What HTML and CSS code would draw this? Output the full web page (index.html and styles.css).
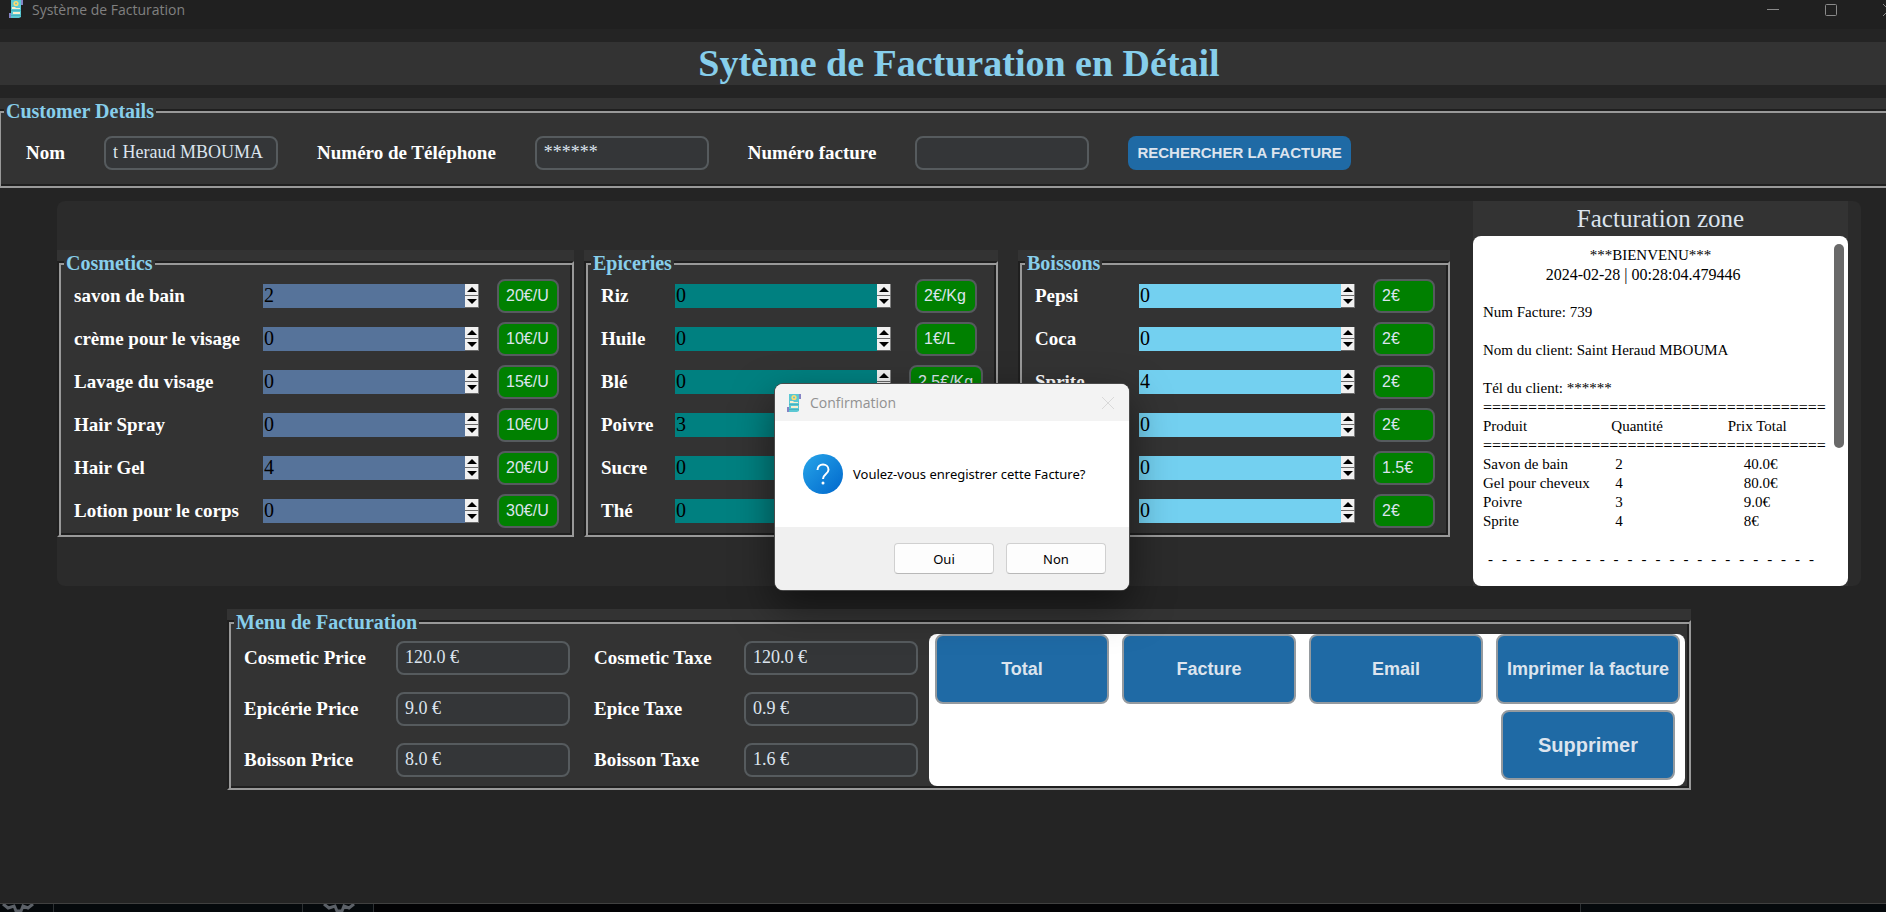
FILE: index.html
```html
<!DOCTYPE html>
<html lang="fr">
<head>
<meta charset="utf-8">
<title>Système de Facturation</title>
<link rel="stylesheet" href="styles.css">
</head>
<body>
<svg width="0" height="0" class="defs" aria-hidden="true">
  <symbol id="receipt" viewBox="0 0 14 18">
    <path d="M11 0h3v5h-3zM0 13h3v5H0z" fill="#8583c4"/>
    <path d="M2 0h10v17l-2 1H2z" fill="#5bc8d3"/>
    <circle cx="7" cy="3.5" r="2.6" fill="#ffdc70"/>
    <circle cx="7" cy="3.5" r="1" fill="#5bc8d3"/>
    <path d="M3 7h3l1 1h4v1H3zM4 12h7v2H4z" fill="#f8efd0"/>
    <path d="M2 10h10v1H2zM2 15h10v1H2z" fill="#46b3c0"/>
  </symbol>
  <symbol id="gear" viewBox="0 0 34 8">
    <path d="M2 0l5 4 6-2 2 5h5l2-5 5 2 5-4" fill="none" stroke="#5c6168" stroke-width="3"/>
  </symbol>
</svg>
<div class="window">
  <header class="titlebar">
    <svg class="app-icon"><use href="#receipt"/></svg>
    <span class="app-name">Système de Facturation</span>
    <button class="win-btn" aria-label="Réduire"><svg viewBox="0 0 12 12"><path d="M0 5.500h12"/></svg></button>
    <button class="win-btn" aria-label="Agrandir"><svg viewBox="0 0 12 12"><rect x=".5" y=".5" width="11" height="11" rx="1"/></svg></button>
    <button class="win-btn" aria-label="Fermer"><svg viewBox="0 0 12 12"><path d="M0 0l12 12M12 0L0 12"/></svg></button>
  </header>

  <h1 class="banner">Sytème de Facturation en Détail</h1>

  <fieldset class="frame customer">
    <legend class="legend">Customer Details</legend>
    <div class="frame-body customer-body">
      <label class="label" for="nom">Nom</label>
      <input class="entry" id="nom" value="t Heraud MBOUMA">
      <label class="label" for="tel">Numéro de Téléphone</label>
      <input class="entry" id="tel" value="******">
      <label class="label" for="num">Numéro facture</label>
      <input class="entry" id="num">
      <button class="btn search">RECHERCHER LA FACTURE</button>
    </div>
  </fieldset>

  <main class="shop">
    <fieldset class="frame cosmetics">
      <legend class="legend">Cosmetics</legend>
      <div class="frame-body products">
        <label class="label" for="c1">savon de bain</label>
        <div class="spin"><input id="c1" value="2"><button class="up" aria-label="Plus"></button><button class="down" aria-label="Moins"></button></div>
        <input class="price" aria-label="Prix" readonly value="20€/U">
        <label class="label" for="c2">crème pour le visage</label>
        <div class="spin"><input id="c2" value="0"><button class="up" aria-label="Plus"></button><button class="down" aria-label="Moins"></button></div>
        <input class="price" aria-label="Prix" readonly value="10€/U">
        <label class="label" for="c3">Lavage du visage</label>
        <div class="spin"><input id="c3" value="0"><button class="up" aria-label="Plus"></button><button class="down" aria-label="Moins"></button></div>
        <input class="price" aria-label="Prix" readonly value="15€/U">
        <label class="label" for="c4">Hair Spray</label>
        <div class="spin"><input id="c4" value="0"><button class="up" aria-label="Plus"></button><button class="down" aria-label="Moins"></button></div>
        <input class="price" aria-label="Prix" readonly value="10€/U">
        <label class="label" for="c5">Hair Gel</label>
        <div class="spin"><input id="c5" value="4"><button class="up" aria-label="Plus"></button><button class="down" aria-label="Moins"></button></div>
        <input class="price" aria-label="Prix" readonly value="20€/U">
        <label class="label" for="c6">Lotion pour le corps</label>
        <div class="spin"><input id="c6" value="0"><button class="up" aria-label="Plus"></button><button class="down" aria-label="Moins"></button></div>
        <input class="price" aria-label="Prix" readonly value="30€/U">
      </div>
    </fieldset>

    <fieldset class="frame groceries">
      <legend class="legend">Epiceries</legend>
      <div class="frame-body products">
        <label class="label" for="e1">Riz</label>
        <div class="spin"><input id="e1" value="0"><button class="up" aria-label="Plus"></button><button class="down" aria-label="Moins"></button></div>
        <input class="price" aria-label="Prix" readonly value="2€/Kg">
        <label class="label" for="e2">Huile</label>
        <div class="spin"><input id="e2" value="0"><button class="up" aria-label="Plus"></button><button class="down" aria-label="Moins"></button></div>
        <input class="price" aria-label="Prix" readonly value="1€/L">
        <label class="label" for="e3">Blé</label>
        <div class="spin"><input id="e3" value="0"><button class="up" aria-label="Plus"></button><button class="down" aria-label="Moins"></button></div>
        <input class="price wide" aria-label="Prix" readonly value="2.5€/Kg">
        <label class="label" for="e4">Poivre</label>
        <div class="spin"><input id="e4" value="3"><button class="up" aria-label="Plus"></button><button class="down" aria-label="Moins"></button></div>
        <input class="price" aria-label="Prix" readonly value="3€/Kg">
        <label class="label" for="e5">Sucre</label>
        <div class="spin"><input id="e5" value="0"><button class="up" aria-label="Plus"></button><button class="down" aria-label="Moins"></button></div>
        <input class="price" aria-label="Prix" readonly value="2€/Kg">
        <label class="label" for="e6">Thé</label>
        <div class="spin"><input id="e6" value="0"><button class="up" aria-label="Plus"></button><button class="down" aria-label="Moins"></button></div>
        <input class="price" aria-label="Prix" readonly value="2€/U">
      </div>
    </fieldset>

    <fieldset class="frame drinks">
      <legend class="legend">Boissons</legend>
      <div class="frame-body products">
        <label class="label" for="b1">Pepsi</label>
        <div class="spin"><input id="b1" value="0"><button class="up" aria-label="Plus"></button><button class="down" aria-label="Moins"></button></div>
        <input class="price" aria-label="Prix" readonly value="2€">
        <label class="label" for="b2">Coca</label>
        <div class="spin"><input id="b2" value="0"><button class="up" aria-label="Plus"></button><button class="down" aria-label="Moins"></button></div>
        <input class="price" aria-label="Prix" readonly value="2€">
        <label class="label" for="b3">Sprite</label>
        <div class="spin"><input id="b3" value="4"><button class="up" aria-label="Plus"></button><button class="down" aria-label="Moins"></button></div>
        <input class="price" aria-label="Prix" readonly value="2€">
        <label class="label" for="b4">Fanta</label>
        <div class="spin"><input id="b4" value="0"><button class="up" aria-label="Plus"></button><button class="down" aria-label="Moins"></button></div>
        <input class="price" aria-label="Prix" readonly value="2€">
        <label class="label" for="b5">Eau</label>
        <div class="spin"><input id="b5" value="0"><button class="up" aria-label="Plus"></button><button class="down" aria-label="Moins"></button></div>
        <input class="price" aria-label="Prix" readonly value="1.5€">
        <label class="label" for="b6">Jus</label>
        <div class="spin"><input id="b6" value="0"><button class="up" aria-label="Plus"></button><button class="down" aria-label="Moins"></button></div>
        <input class="price" aria-label="Prix" readonly value="2€">
      </div>
    </fieldset>

    <section class="receipt">
      <h2 class="receipt-title">Facturation zone</h2>
      <div class="paper">
        <p class="center">***BIENVENU***</p>
        <p class="center stamp">2024-02-28 | 00:28:04.479446</p>
        <p class="spaced">Num Facture: 739</p>
        <p class="spaced">Nom du client: Saint Heraud MBOUMA</p>
        <p class="spaced">Tél du client: ******</p>
        <table class="lines">
          <thead>
            <tr><td colspan="3" class="rule">======================================</td></tr>
            <tr><th>Produit</th><th>Quantité</th><th>Prix Total</th></tr>
            <tr><td colspan="3" class="rule">======================================</td></tr>
          </thead>
          <tbody>
            <tr><td>Savon de bain</td><td>2</td><td>40.0€</td></tr>
            <tr><td>Gel pour cheveux</td><td>4</td><td>80.0€</td></tr>
            <tr><td>Poivre</td><td>3</td><td>9.0€</td></tr>
            <tr><td>Sprite</td><td>4</td><td>8€</td></tr>
          </tbody>
        </table>
        <p class="spaced dashes">- - - - - - - - - - - - - - - - - - - - - - - -</p>
        <span class="thumb"></span>
      </div>
    </section>
  </main>

  <fieldset class="frame billing">
    <legend class="legend">Menu de Facturation</legend>
    <div class="frame-body billing-body">
      <div class="totals">
        <label class="label" for="cp">Cosmetic Price</label><input class="entry" id="cp" value="120.0 €">
        <label class="label" for="ct">Cosmetic Taxe</label><input class="entry" id="ct" value="120.0 €">
        <label class="label" for="ep">Epicérie Price</label><input class="entry" id="ep" value="9.0 €">
        <label class="label" for="et">Epice Taxe</label><input class="entry" id="et" value="0.9 €">
        <label class="label" for="bp">Boisson Price</label><input class="entry" id="bp" value="8.0 €">
        <label class="label" for="bt">Boisson Taxe</label><input class="entry" id="bt" value="1.6 €">
      </div>
      <div class="actions">
        <button class="btn action">Total</button>
        <button class="btn action">Facture</button>
        <button class="btn action">Email</button>
        <button class="btn action print">Imprimer la facture</button>
        <button class="btn action delete">Supprimer</button>
      </div>
    </div>
  </fieldset>

  <div class="dialog" role="dialog" aria-labelledby="dlg-title">
    <div class="dialog-bar">
      <svg class="app-icon"><use href="#receipt"/></svg>
      <span id="dlg-title">Confirmation</span>
      <button class="dialog-close" aria-label="Fermer"><svg viewBox="0 0 12 12"><path d="M0 0l12 12M12 0L0 12"/></svg></button>
    </div>
    <div class="dialog-body">
      <svg class="question" viewBox="0 0 40 40">
        <defs><linearGradient id="blue" x1="0" y1="0" x2="1" y2="1"><stop offset="0" stop-color="#27a5e9"/><stop offset="1" stop-color="#0067cc"/></linearGradient></defs>
        <circle cx="20" cy="20" r="20" fill="url(#blue)"/>
        <path d="M14.500 16c0-3.500 2.500-5.500 5.500-5.500s5.500 2 5.500 5.200c0 4.300-5.500 4.300-5.500 9.300" fill="none" stroke="#fff" stroke-width="2"/>
        <circle cx="20" cy="29" r="1.500" fill="#fff"/>
      </svg>
      <p>Voulez-vous enregistrer cette Facture?</p>
    </div>
    <div class="dialog-foot">
      <button class="dialog-btn">Oui</button>
      <button class="dialog-btn">Non</button>
    </div>
  </div>
</div>
<footer class="desktop">
  <span class="cell first"><svg class="gear"><use href="#gear"/></svg></span>
  <span class="cell second"></span>
  <span class="cell third"><svg class="gear"><use href="#gear"/></svg></span>
  <span class="cell rest"></span>
  <span class="cell last"></span>
</footer>
</body>
</html>
```
FILE: styles.css
```css
* { box-sizing: border-box; }
body {
  margin: 0;
  min-height: 100vh;
  display: flex;
  flex-direction: column;
  overflow: hidden;
  background: #050608;
  font-family: "Liberation Serif", "Times New Roman", serif;
}
p, h1, h2 { margin: 0; font-weight: normal; }
button, input { font: inherit; margin: 0; padding: 0; border: 0; border-radius: 0; outline: 0; }
.defs { position: absolute; }

/* The window runs past the right edge of the screen. */
.window {
  position: relative;
  flex: 1;
  margin-right: -32px;
  background: #242424;
  border-bottom: 1px solid #404040;
}

.titlebar {
  display: flex;
  align-items: flex-start;
  height: 29px;
  padding-left: 9px;
  background: #202020;
  color: #808080;
  font: 14px/20px "Open Sans", "Noto Sans", sans-serif;
}
.app-icon { width: 14px; height: 18px; flex: none; }
.app-name { flex: 1; margin-left: 9px; }
.win-btn { width: 58px; height: 20px; background: none; }
.win-btn svg { display: block; width: 12px; height: 12px; margin: 4px auto; fill: none; stroke: #8a8a8a; }

.banner {
  margin: 13px 0;
  background: #333;
  color: #87ceeb;
  font-weight: bold;
  font-size: 38px;
  line-height: 43px;
  text-align: center;
}

/* Labelled frames with a two-tone groove */
.frame {
  position: relative;
  min-width: 0;
  margin: 0;
  padding: 11px 0 0;
  border: 0;
  background: #333;
}
.legend {
  position: absolute;
  top: 2px;
  left: 7px;
  padding: 0 2px;
  background: #333;
  color: #87ceeb;
  font-weight: bold;
  font-size: 20px;
  line-height: 22px;
}
.frame-body {
  border: 2px solid;
  border-color: #1f1f1f #999 #999 #1f1f1f;
  box-shadow: inset 2px 2px 0 #999, inset -2px -2px 0 #1f1f1f;
}
.label { color: #fff; font-weight: bold; font-size: 19px; line-height: 24px; white-space: nowrap; }
.entry {
  width: 174px;
  height: 34px;
  padding: 0 7px 1px;
  border: 2px solid #565b5e;
  border-radius: 8px;
  background: #343638;
  color: #dce4ee;
  font-size: 18px;
}
.btn {
  border-radius: 8px;
  background: #1f6aa5;
  color: #dce4ee;
  font: bold 18px/24px "Liberation Sans", Arial, sans-serif;
}

.customer { margin: 0 -3px; }
.customer-body { display: flex; align-items: center; gap: 39px; padding: 25px 27px 16px; }
.search { height: 34px; padding: 0 9px; font-size: 15px; }

.shop {
  display: grid;
  grid-template-columns: 517fr 434fr 442fr 398fr;
  align-items: center;
  margin: 13px 57px 0;
  padding-right: 13px;
  border-radius: 8px;
  background: #2b2b2b;
}
.groceries { margin: 0 10px; }
.drinks { margin-left: 10px; }
.products {
  display: grid;
  align-items: center;
  row-gap: 9px;
  padding: 16px 13px 7px 15px;
}
.cosmetics .products { grid-template-columns: 1fr 216px 18px 62px; }
.groceries .products { grid-template-columns: 1fr 216px 18px 74px; }
.drinks .products { grid-template-columns: 1fr 216px 18px 62px; }
.spin {
  grid-column: 2;
  display: grid;
  grid-template: 12px 12px / 1fr 14px;
}
.spin input { grid-row: 1 / 3; min-width: 0; padding: 0 1px 1px; color: #000; font-size: 20px; line-height: 23px; }
.spin button {
  display: grid;
  place-items: center;
  border-right: 1px solid #808080;
  border-bottom: 1px solid #696969;
  background: #f0f0f0;
}
.up::before, .down::before { content: ""; border: 5px solid transparent; }
.up::before { border-top: 0; border-bottom-color: #000; }
.down::before { border-bottom: 0; border-top-color: #000; }
.cosmetics .spin input { background: #56739a; }
.groceries .spin input { background: #008080; }
.drinks .spin input { background: #73d0f0; }
.price {
  grid-column: 4;
  justify-self: center;
  width: 62px;
  height: 34px;
  padding: 0 0 0 7px;
  border: 2px solid #565b5e;
  border-radius: 8px;
  background: #008000;
  color: #dce4ee;
  font: 16px "Liberation Sans", Arial, sans-serif;
}
.price.wide { width: 74px; }

.receipt { align-self: start; margin-left: 23px; background: #333; }
.receipt-title { color: #dce4ee; font-size: 25px; line-height: 35px; text-align: center; }
.paper {
  position: relative;
  height: 350px;
  padding: 10px 22px 0 10px;
  border-radius: 8px;
  background: #fff;
  color: #000;
  font-size: 15px;
  line-height: 19px;
  white-space: nowrap;
}
.center { padding-right: 8px; text-align: center; }
.stamp { padding-right: 23px; font-size: 16px; line-height: 19px; }
.spaced { margin-top: 19px; }
.lines { border-collapse: collapse; width: 100%; table-layout: fixed; }
.lines th, .lines td { height: 19px; padding: 0; font-weight: normal; text-align: left; }
.lines th:nth-child(2) { padding-left: 14px; }
.lines th:nth-child(3) { padding-left: 16px; }
.lines tbody td:nth-child(2) { padding-left: 18px; }
.lines tbody td:nth-child(3) { padding-left: 32px; }
.lines .rule { font-size: 16px; }
.dashes { margin-left: 5px; margin-right: 12px; text-align-last: justify; white-space: normal; }
.thumb { position: absolute; top: 8px; right: 4px; width: 10px; height: 204px; border-radius: 5px; background: #696969; }

.billing { width: fit-content; margin: 23px auto 0; }
.billing-body { display: flex; align-items: flex-start; padding: 12px 4px 2px 15px; }
.totals {
  display: grid;
  grid-template-columns: 152px 198px 150px 174px;
  align-items: center;
  row-gap: 17px;
  padding-top: 7px;
}
.actions {
  display: grid;
  grid-template-columns: repeat(3, 174px) 184px;
  column-gap: 13px;
  row-gap: 6px;
  margin-left: 11px;
  padding: 0 5px 6px 6px;
  border-radius: 8px;
  background: #fff;
}
.action { height: 70px; border: 2px solid #949a9f; }
.delete { grid-column: 4; justify-self: center; width: 174px; font-size: 20px; }

.dialog {
  position: absolute;
  top: 384px;
  left: calc(50% - 184px);
  width: 354px;
  border-radius: 8px;
  overflow: hidden;
  background: #fff;
  box-shadow: 0 0 0 1px #4a4a4a, 0 16px 40px rgba(0, 0, 0, .5);
  font: 13px/18px "Noto Sans", sans-serif;
}
.dialog-bar {
  display: flex;
  align-items: center;
  height: 37px;
  padding: 0 15px 0 12px;
  background: #f3f3f3;
  color: #919191;
  font: 14px/20px "Open Sans", "Noto Sans", sans-serif;
}
.dialog-bar span { flex: 1; margin-left: 9px; }
.dialog-close { width: 12px; height: 12px; background: none; }
.dialog-close svg { display: block; width: 12px; height: 12px; stroke: #d9d9d9; overflow: visible; }
.dialog-body { display: flex; align-items: center; gap: 10px; padding: 33px 28px; }
.question { width: 40px; height: 40px; flex: none; }
.dialog-body p { white-space: nowrap; }
.dialog-foot { display: flex; justify-content: flex-end; gap: 12px; padding: 16px 23px; background: #f0f0f0; }
.dialog-btn {
  width: 100px;
  height: 31px;
  border: 1px solid #d0d0d0;
  border-bottom-color: #b8b8b8;
  border-radius: 4px;
  background: #fdfdfd;
  color: #000;
}

.desktop { display: flex; height: 8px; overflow: hidden; }
.cell { border-right: 1px solid #2c3033; background: #05090c; }
.first { width: 54px; }
.second { width: 249px; }
.third { width: 71px; padding-left: 18px; }
.rest { flex: 1; background: #020204; }
.last { width: 305px; border: 0; }
.gear { display: block; width: 34px; height: 8px; margin-left: 1px; }
```
